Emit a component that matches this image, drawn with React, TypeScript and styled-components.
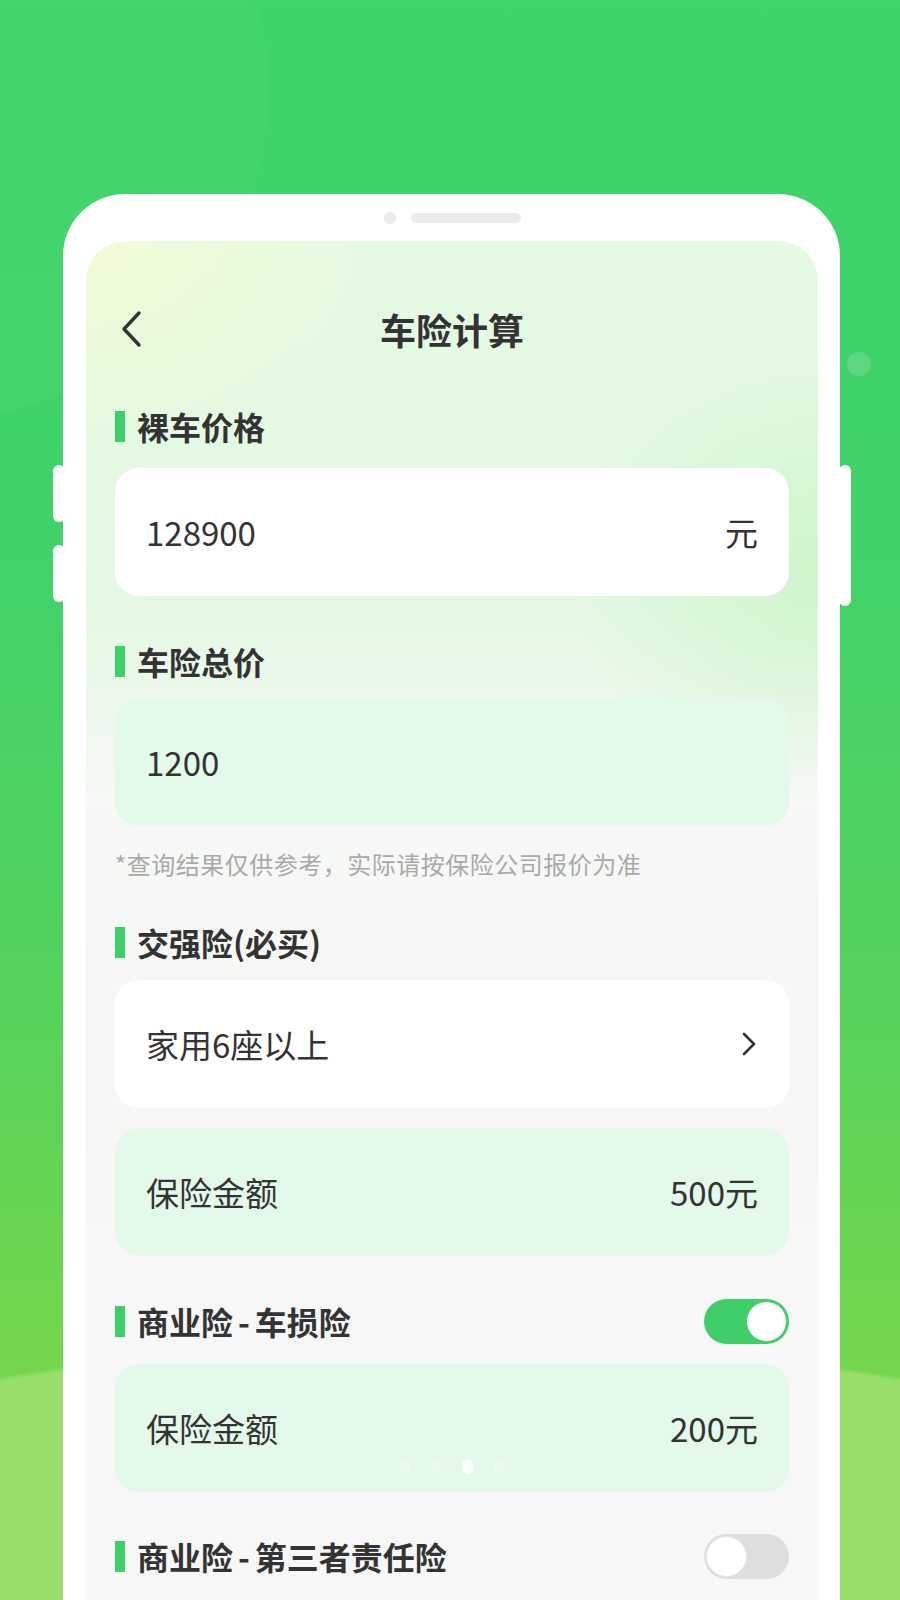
import React from "react";
import styled, { createGlobalStyle } from "styled-components";

const GlobalStyle = createGlobalStyle`
  html, body {
    margin: 0;
    padding: 0;
  }
  body {
    font-family: "Noto Sans CJK SC", "Noto Sans", sans-serif;
    color: #333333;
  }
`;

// green backdrop with the lighter wave at the bottom
const Page = styled.div`
  position: relative;
  width: 900px;
  height: 1600px;
  overflow: hidden;
  box-sizing: border-box;
  padding: 194px 60px 0 63px;
  background:
    radial-gradient(circle 330px at -60px 90px, rgba(255, 255, 255, 0.025) 99%, transparent 100%),
    radial-gradient(ellipse 1100px 420px at 50% 1760px, #97de6b 99%, transparent 100%),
    linear-gradient(180deg, #3fd36b 0%, #41d26a 35%, #55d35c 62%, #74d64d 85%, #7ad74c 100%);
`;

const Bubble = styled.div`
  position: absolute;
  left: 847px;
  top: 352px;
  width: 24px;
  height: 24px;
  border-radius: 50%;
  background: rgba(255, 255, 255, 0.15);
`;

const Phone = styled.div`
  position: relative;
  width: 777px;
  height: 1500px;
  box-sizing: border-box;
  padding: 18px 22px 0 23px;
  background: #ffffff;
  border-radius: 62px 62px 0 0;
`;

const SideKey = styled.div<{ $side: "left" | "right"; $top: number; $h: number }>`
  position: absolute;
  ${(p) => (p.$side === "left" ? "left: -10px;" : "right: -11px;")}
  top: ${(p) => p.$top}px;
  width: 12px;
  height: ${(p) => p.$h}px;
  background: #ffffff;
  border-radius: 6px;
`;

const Speaker = styled.div`
  display: flex;
  align-items: center;
  justify-content: center;
  gap: 15px;
  height: 12px;
  margin-bottom: 17px;
`;

const Lens = styled.span`
  width: 12px;
  height: 12px;
  border-radius: 50%;
  background: #ebebeb;
`;

const Grille = styled.span`
  width: 110px;
  height: 10px;
  border-radius: 5px;
  background: #ebebeb;
`;

const Screen = styled.div`
  min-height: 1400px;
  box-sizing: border-box;
  padding: 58px 29px 0;
  border-radius: 40px 40px 0 0;
  background:
    radial-gradient(ellipse 420px 320px at 0% 0%, rgba(242, 252, 214, 0.95), transparent 70%),
    radial-gradient(ellipse 360px 320px at 100% 330px, rgba(204, 244, 200, 0.85), transparent 70%),
    linear-gradient(180deg, #e5fae2 0px, #e3f9e3 360px, #f6f8f5 560px, #f7f7f7 100%);
`;

const Header = styled.div`
  display: grid;
  grid-template-columns: 60px 1fr 60px;
  align-items: center;
  height: 60px;
`;

const BackButton = styled.div`
  display: flex;
  align-items: center;
  padding-left: 4px;
  color: #333333;
`;

const Title = styled.h1`
  margin: 0;
  text-align: center;
  font-size: 36px;
  font-weight: 700;
  color: #333333;
`;

const LabelRow = styled.div<{ $top: number }>`
  display: flex;
  align-items: center;
  justify-content: space-between;
  height: 44px;
  margin-top: ${(p) => p.$top}px;
`;

const Label = styled.div`
  display: flex;
  align-items: center;
  gap: 12px;
  font-size: 32px;
  font-weight: 600;
  color: #333333;
  line-height: 1;

  &::before {
    content: "";
    width: 10px;
    height: 31px;
    background: #3ecf6a;
  }
`;

const Dash = styled.span`
  padding: 0 5px;
`;

const Card = styled.div<{ $tone: "white" | "mint"; $top: number }>`
  position: relative;
  display: flex;
  align-items: center;
  justify-content: space-between;
  height: 128px;
  box-sizing: border-box;
  padding: 0 31px;
  margin-top: ${(p) => p.$top}px;
  border-radius: 24px;
  background: ${(p) => (p.$tone === "white" ? "#ffffff" : "#e3f9ea")};
  font-size: 33px;
  color: #333333;
`;

const Note = styled.p`
  margin: 21px 0 0;
  font-size: 24px;
  letter-spacing: 0.5px;
  line-height: 34px;
  color: #a9a9a9;
`;

const Toggle = styled.div<{ $on: boolean }>`
  display: flex;
  align-items: center;
  justify-content: ${(p) => (p.$on ? "flex-end" : "flex-start")};
  width: 85px;
  height: 45px;
  box-sizing: border-box;
  padding: 2px;
  border-radius: 23px;
  background: ${(p) => (p.$on ? "#3fce6a" : "#dedede")};
`;

const Knob = styled.span<{ $on: boolean }>`
  width: 41px;
  height: 41px;
  box-sizing: border-box;
  border-radius: 50%;
  background: #ffffff;
  border: 1px solid ${(p) => (p.$on ? "#3fce6a" : "#e6e6e6")};
`;

const Dots = styled.div`
  position: absolute;
  left: 0;
  right: 0;
  bottom: 18px;
  display: flex;
  justify-content: center;
  align-items: center;
  gap: 21px;
`;

const Dot = styled.span<{ $active?: boolean }>`
  width: ${(p) => (p.$active ? 11 : 10)}px;
  height: ${(p) => (p.$active ? 15 : 10)}px;
  border-radius: 6px;
  background: ${(p) => (p.$active ? "rgba(255,255,255,0.9)" : "rgba(255,255,255,0.3)")};
`;

const BackIcon = () => (
  <svg width="24" height="38" viewBox="0 0 24 38" fill="none">
    <path d="M20 3 L5 19 L20 35" stroke="currentColor" strokeWidth="3.4" strokeLinecap="round" strokeLinejoin="round" />
  </svg>
);

const Chevron = () => (
  <svg width="18" height="24" viewBox="0 0 18 24" fill="none">
    <path d="M4 2 L14 12 L4 22" stroke="#333333" strokeWidth="2.6" strokeLinecap="round" strokeLinejoin="round" />
  </svg>
);

export default function App() {
  return (
    <>
      <GlobalStyle />
      <Page>
        <Bubble />
        <Phone>
          <SideKey $side="left" $top={271} $h={57} />
          <SideKey $side="left" $top={351} $h={57} />
          <SideKey $side="right" $top={271} $h={141} />
          <Speaker>
            <Lens />
            <Grille />
          </Speaker>
          <Screen>
            <Header>
              <BackButton>
                <BackIcon />
              </BackButton>
              <Title>车险计算</Title>
              <span />
            </Header>

            <LabelRow $top={45}>
              <Label>裸车价格</Label>
            </LabelRow>
            <Card $tone="white" $top={20}>
              <span>128900</span>
              <span>元</span>
            </Card>

            <LabelRow $top={43}>
              <Label>车险总价</Label>
            </LabelRow>
            <Card $tone="mint" $top={15}>
              <span>1200</span>
            </Card>
            <Note>*查询结果仅供参考，实际请按保险公司报价为准</Note>

            <LabelRow $top={39}>
              <Label>交强险(必买)</Label>
            </LabelRow>
            <Card $tone="white" $top={16}>
              <span>家用6座以上</span>
              <Chevron />
            </Card>
            <Card $tone="mint" $top={20}>
              <span>保险金额</span>
              <span>500元</span>
            </Card>

            <LabelRow $top={43}>
              <Label>
                <span>
                  商业险<Dash>-</Dash>车损险
                </span>
              </Label>
              <Toggle $on>
                <Knob $on />
              </Toggle>
            </LabelRow>
            <Card $tone="mint" $top={21}>
              <span>保险金额</span>
              <span>200元</span>
              <Dots>
                <Dot />
                <Dot />
                <Dot $active />
                <Dot />
              </Dots>
            </Card>

            <LabelRow $top={42}>
              <Label>
                <span>
                  商业险<Dash>-</Dash>第三者责任险
                </span>
              </Label>
              <Toggle $on={false}>
                <Knob $on={false} />
              </Toggle>
            </LabelRow>
          </Screen>
        </Phone>
      </Page>
    </>
  );
}
